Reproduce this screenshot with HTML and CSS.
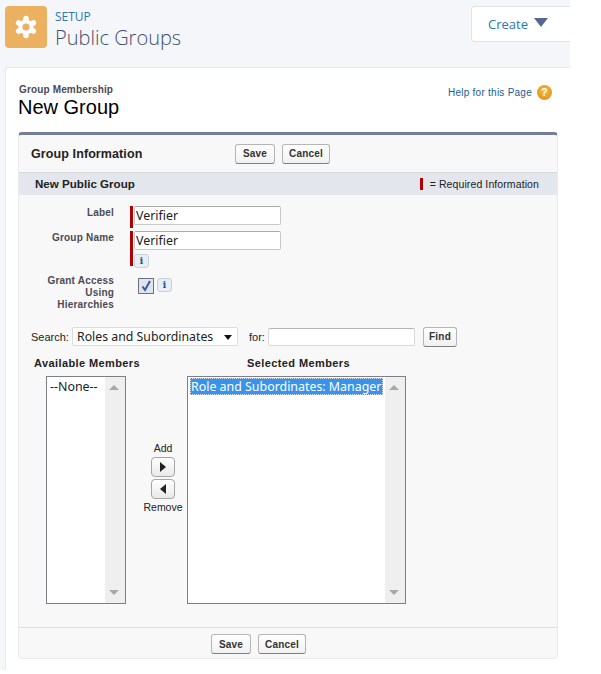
FILE: index.html
```html
<!DOCTYPE html>
<html lang="en">
<head>
<meta charset="utf-8">
<title>New Group</title>
<link rel="stylesheet" href="styles.css">
</head>
<body>
<div class="page">
  <header class="top">
    <div class="app-icon">
      <svg width="42" height="42" viewBox="0 0 42 42">
        <g stroke="#fff" stroke-width="5.4" stroke-linecap="round">
          <path d="M21 12.5V29.5M13.6 16.8L28.4 25.2M13.6 25.2L28.4 16.8"/>
        </g>
        <circle cx="21" cy="21" r="7.6" fill="#fff"/>
        <circle cx="21" cy="21" r="3.6" fill="#ecb160"/>
      </svg>
    </div>
    <div class="titles">
      <div class="setup">SETUP</div>
      <div class="pub">Public Groups</div>
    </div>
    <button class="create">Create<span class="caret"></span></button>
  </header>
  <main class="panel">
    <div class="page-head">
      <div>
        <div class="crumb">Group Membership</div>
        <h1>New Group</h1>
      </div>
      <a class="help">Help for this Page<span class="help-ic">?</span></a>
    </div>
    <section class="block">
      <div class="block-head">
        <h2>Group Information</h2>
        <div class="btns"><button class="btn w-save">Save</button><button class="btn w-cancel">Cancel</button></div>
      </div>
      <div class="sub-head">
        <h3>New Public Group</h3>
        <div class="req"><span class="req-bar"></span>= Required Information</div>
      </div>
      <div class="form">
        <div class="lbl l1">Label</div>
        <div class="field f1"><span class="bar b1"></span><input class="txt" value="Verifier"></div>
        <div class="lbl l2">Group Name</div>
        <div class="field f2"><span class="bar b2"></span><div class="stack"><input class="txt" value="Verifier"><span class="info">i</span></div></div>
        <div class="lbl l3">Grant Access Using Hierarchies</div>
        <div class="field f3">
          <span class="check"><svg width="12" height="12" viewBox="0 0 12 12"><path d="M2.5 6.5L5 10L10 1" fill="none" stroke="#3a5a9a" stroke-width="2"/></svg></span>
          <span class="info">i</span>
        </div>
      </div>
      <div class="search">
        <span class="s-lbl">Search:</span>
        <div class="select">Roles and Subordinates<span class="sel-caret"></span></div>
        <span class="for">for:</span>
        <input class="s-input">
        <button class="btn find">Find</button>
      </div>
      <div class="dueling">
        <div class="col-a">
          <div class="col-title">Available Members</div>
          <div class="list avail"><div class="opts">--None--</div><div class="sb"><i class="up"></i><i class="down"></i></div></div>
        </div>
        <div class="move">
          <div class="mv-t add">Add</div>
          <button class="arrow"><i class="ar-r"></i></button>
          <button class="arrow"><i class="ar-l"></i></button>
          <div class="mv-t rem">Remove</div>
        </div>
        <div class="col-b">
          <div class="col-title">Selected Members</div>
          <div class="list chosen"><div class="opts"><div class="sel-opt">Role and Subordinates: Manager</div></div><div class="sb"><i class="up"></i><i class="down"></i></div></div>
        </div>
      </div>
      <div class="foot"><button class="btn w-save">Save</button><button class="btn w-cancel">Cancel</button></div>
    </section>
  </main>
</div>
</body>
</html>
```
FILE: styles.css
```css
* { box-sizing: border-box; }
html, body { margin: 0; padding: 0; background: #fff; }
body { font-family: "Liberation Sans", Arial, sans-serif; }
.page { width: 570px; height: 670px; background: #f4f6f9; padding-left: 5px; overflow: hidden; }
.top { height: 67px; display: flex; align-items: flex-start; padding-top: 6px; }
.app-icon { width: 42px; height: 42px; background: #ecb160; border-radius: 4px; }
.titles { margin-left: 8px; flex: 1; }
.setup { font: 12px/14px "Open Sans", sans-serif; color: #2a76b8; margin-top: 4px; }
.pub { font: 300 20px/26px "Open Sans", sans-serif; color: #44506b; margin-top: 1px; }
.create { width: 99px; height: 36px; background: #fff; border: 1px solid #dfe3ea; border-right: 0; border-radius: 4px 0 0 4px; font: 13px "Open Sans", sans-serif; color: #2a76b8; padding: 0 0 0 16px; text-align: left; display: flex; align-items: center; }
.caret { width: 0; height: 0; border-left: 7px solid transparent; border-right: 7px solid transparent; border-top: 9px solid #54698d; margin-left: 6px; margin-top: -3px; }
.panel { background: #fff; border-top: 1px solid #e4e7ee; border-left: 1px solid #e4e7ee; height: 603px; padding: 0 12px; border-radius: 3px 0 0 0; }
.page-head { height: 64px; display: flex; justify-content: space-between; position: relative; }
.crumb { font: bold 10px/12px "Liberation Sans", sans-serif; color: #4a4a56; margin: 16px 0 -1px 1px; letter-spacing: .15px; }
h1 { font: 20px/24px "Liberation Sans", sans-serif; color: #000; margin: 0; }
.help { font-size: 10px; line-height: 15px; color: #1a5c96; margin-top: 16px; margin-right: 6px; display: flex; align-items: center; letter-spacing: .25px; height: 16px; }
.help-ic { width: 15px; height: 15px; margin-left: 5px; border-radius: 50%; background: radial-gradient(circle at 50% 40%, #f6b93f, #dc8a14); color: #fff; font: bold 11px/15px "Liberation Sans", sans-serif; text-align: center; }
.block { width: 540px; height: 527px; background: #f8f8f8; border: 1px solid #eaeaea; border-top: 3px solid #747e96; border-radius: 4px; }
.block-head { height: 37px; display: flex; align-items: center; padding-left: 12px; }
h2 { font: bold 12.5px/16px "Liberation Sans", sans-serif; color: #222; margin: 0; width: 204px; letter-spacing: .1px; }
.btns { display: flex; gap: 7px; }
.btn { height: 20px; border: 1px solid #b5b5b5; border-bottom-color: #7f7f7f; border-radius: 3px; background: linear-gradient(#fff, #f1f1f1); font: bold 10px "Liberation Sans", sans-serif; color: #333; padding: 0; letter-spacing: .2px; }
.w-save { width: 40px; }
.w-cancel { width: 48px; }
.sub-head { height: 23px; background: #e3e6ed; border-top: 1px solid #dbdbdb; display: flex; justify-content: space-between; align-items: center; padding: 0 18px 0 16px; }
h3 { font: bold 11.6px/16px "Liberation Sans", sans-serif; color: #222; margin: 0; }
.req { font-size: 10.5px; color: #222; display: flex; align-items: center; letter-spacing: .1px; }
.req-bar { width: 3px; height: 12px; background: #b20000; margin-right: 7px; }
.form { display: grid; grid-template-columns: 95px 1fr; column-gap: 16px; padding-top: 11px; }
.lbl { font: bold 10px/12px "Liberation Sans", sans-serif; color: #4a4a56; text-align: right; letter-spacing: .2px; }
.l1 { padding-top: 1px; height: 25px; }
.l2 { padding-top: 1px; height: 44px; }
.l3 { height: 39px; margin-left: 15px; }
.field { display: flex; align-items: flex-start; }
.f1 { height: 25px; }
.f2 { height: 44px; }
.bar { width: 3px; background: #b20000; margin-right: 1px; }
.b1 { height: 22px; }
.b2 { height: 35px; }
.stack { display: flex; flex-direction: column; align-items: flex-start; }
.txt { width: 147px; height: 19px; border: 1px solid #c8c8c8; border-top-color: #aaa; border-radius: 2px; background: #fff; font: 12.4px "Noto Sans", sans-serif; color: #222; padding: 0 1px; }
.info { width: 15px; height: 14px; border: 1px solid #c8d0dc; border-radius: 3px; background: #e9eef5; color: #1a5c96; font: bold 10px/12px "DejaVu Serif", serif; text-align: center; margin-top: 4px; display: block; }
.f3 { padding-left: 8px; padding-top: 3px; gap: 3px; }
.f3 .info { margin-top: 0; }
.check { width: 16px; height: 16px; border: 1px solid #70707a; background: #dfe4f2; display: flex; align-items: center; justify-content: center; }
.search { display: flex; align-items: center; height: 19px; margin-top: 13px; padding-left: 12px; font-size: 11px; color: #222; }
.s-lbl { width: 41px; }
.select { width: 166px; height: 19px; background: #fff; border: 1px solid #dcdcdc; border-radius: 2px; font: 12.3px/17px "Noto Sans", sans-serif; color: #222; padding-left: 4px; position: relative; }
.sel-caret { position: absolute; right: 5px; top: 7px; border-left: 4.5px solid transparent; border-right: 4.5px solid transparent; border-top: 5px solid #111; }
.for { margin-left: 11px; width: 19px; }
.s-input { width: 147px; height: 18px; border: 1px solid #d8d8d8; border-top-color: #b5b5b5; border-radius: 2px; background: #fff; padding: 0; }
.find { width: 34px; margin-left: 8px; }
.dueling { display: flex; height: 272px; margin-top: 9px; }
.col-title { font: bold 11px/14px "Liberation Sans", sans-serif; color: #222; height: 21px; padding-top: 1px; letter-spacing: .4px; white-space: nowrap; }
.col-a { width: 125px; padding-left: 15px; }
.avail { margin-left: 12px; width: 80px; }
.list { height: 228px; border: 1px solid #7e7e86; background: #fff; display: flex; }
.opts { flex: 1; min-width: 0; font: 12.4px/17px "Noto Sans", sans-serif; color: #222; padding: 1px 3px; }
.sb { width: 20px; background: #efefef; position: relative; flex: none; }
.up, .down { position: absolute; left: 4px; border-left: 5px solid transparent; border-right: 5px solid transparent; }
.up { top: 8px; border-bottom: 5px solid #a8a8a8; }
.down { bottom: 8px; border-top: 5px solid #a8a8a8; }
.move { width: 38px; padding-top: 86px; display: flex; flex-direction: column; align-items: center; font-size: 10.5px; color: #222; }
.mv-t { line-height: 14px; white-space: nowrap; }
.add { height: 16px; }
.rem { margin-top: 1px; }
.arrow { width: 24px; height: 20px; flex: none; border: 1px solid #a5a5a5; border-radius: 4px; background: linear-gradient(#fff, #e9e9e9); padding: 0; display: flex; align-items: center; justify-content: center; }
.arrow + .arrow { margin-top: 2px; }
.ar-r { border-top: 5px solid transparent; border-bottom: 5px solid transparent; border-left: 6px solid #222; }
.ar-l { border-top: 5px solid transparent; border-bottom: 5px solid transparent; border-right: 6px solid #222; }
.col-b { margin-left: 5px; width: 219px; }
.col-b .col-title { padding-left: 60px; }
.chosen { width: 219px; }
.chosen .opts { padding: 1px 2px; }
.sel-opt { background: #3a93ea; color: #fff; outline: 1px dotted #d8e6f6; outline-offset: -1px; white-space: nowrap; padding-left: 1px; overflow: hidden; }
.foot { height: 33px; border-top: 1px solid #dfdfdf; display: flex; gap: 7px; padding: 6px 0 0 192px; }
```
